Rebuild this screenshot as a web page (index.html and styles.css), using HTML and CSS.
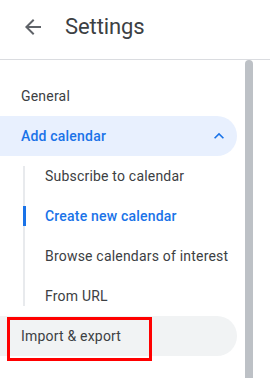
FILE: index.html
```html
<!DOCTYPE html>
<html>
<head>
<meta charset="utf-8">
<link rel="stylesheet" href="styles.css">
</head>
<body>
<header class="header">
  <svg class="back" viewBox="0 0 24 24" width="24" height="24"><path d="M20 11H7.83l5.59-5.59L12 4l-8 8 8 8 1.41-1.41L7.83 13H20v-2z" fill="#5f6368"/></svg>
  <h1 class="title">Settings</h1>
</header>
<div class="main">
  <nav class="nav">
    <div class="item">General</div>
    <div class="item active">
      <span>Add calendar</span>
      <svg class="chev" viewBox="0 0 24 24" width="20" height="20"><path d="M12 8l-6 6 1.41 1.41L12 10.83l4.59 4.58L18 14z" fill="#1a73e8"/></svg>
    </div>
    <div class="sub">
      <div class="subitem">Subscribe to calendar</div>
      <div class="subitem current">Create new calendar</div>
      <div class="subitem">Browse calendars of interest</div>
      <div class="subitem">From URL</div>
    </div>
    <div class="item hover">Import &amp; export<span class="outline"></span></div>
  </nav>
  <div class="scroll"></div>
</div>
</body>
</html>
```
FILE: styles.css
```css
html, body { margin: 0; padding: 0; background: #fff; }
body { font-family: Roboto, "Liberation Sans", sans-serif; color: #3c4043; width: 270px; height: 378px; overflow: hidden; }
.header { border-bottom: 1px solid #dadce0; display: flex; align-items: center; box-sizing: border-box; height: 60px; padding-left: 21px; }
.back { display: block; margin-top: -6px; }
.title { margin: -6px 0 0 20px; font-weight: 400; font-size: 22px; color: #3c4043; font-family: Roboto, sans-serif; letter-spacing: -0.1px; }
.main { display: flex; height: 318px; }
.nav { width: 237px; padding-top: 16px; }
.scroll { width: 8px; margin-left: 8px; background: #bdc1c6; border-radius: 4px 4px 0 0; }
.item { height: 40px; display: flex; align-items: center; justify-content: space-between; padding: 0 8px 0 21px; font-size: 14px; letter-spacing: 0.2px; border-radius: 0 20px 20px 0; position: relative; }
.item.active { background: #e8f0fe; color: #1a73e8; font-weight: 500; }
.item.hover { background: #f1f3f4; }
.chev { display: block; }
.sub { position: relative; margin-left: 23px; }
.sub::before { content: ""; position: absolute; left: 0; top: 10px; bottom: 10px; width: 2px; background: #e8eaed; }
.subitem { height: 40px; display: flex; align-items: center; padding-left: 22px; font-size: 14px; letter-spacing: 0.2px; position: relative; }
.subitem.current { color: #1a73e8; font-weight: 500; }
.subitem.current::before { content: ""; position: absolute; left: 0; top: 10px; width: 3px; height: 20px; background: #1a73e8; }
.outline { position: absolute; left: 7px; top: 1px; width: 139px; height: 38px; border: 3px solid #ff0000; }
```
